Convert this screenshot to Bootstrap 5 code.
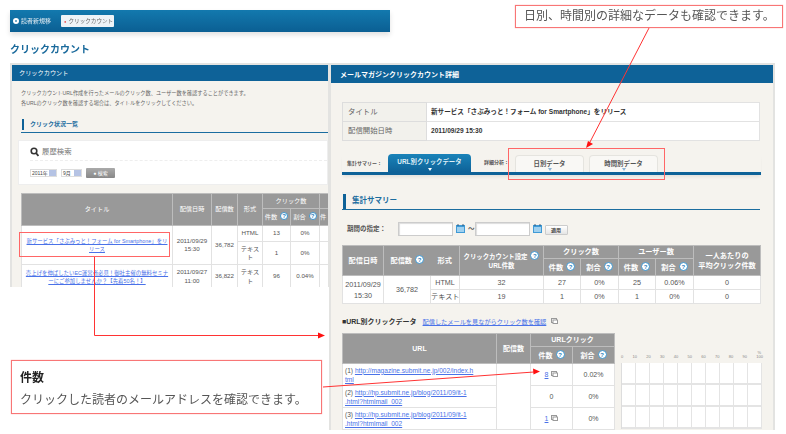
<!DOCTYPE html>
<html lang="ja">
<head>
<meta charset="utf-8">
<title>クリックカウント</title>
<link href="https://cdn.jsdelivr.net/npm/bootstrap@5.3.0/dist/css/bootstrap.min.css" rel="stylesheet">
<style>
html,body{margin:0;background:#fff;overflow:hidden}
body{font-family:"Liberation Sans","Noto Sans CJK JP",sans-serif;color:#555}
.stage{position:relative;width:786px;height:434px;overflow:hidden;background:#fff}
.shot{filter:blur(.45px)}
/* top strip */
.topbar{position:absolute;left:10px;top:10px;width:380px;height:22px;background:linear-gradient(#1379ae,#0b5f93);box-shadow:0 3px 5px rgba(0,0,0,.12);font-size:6px;color:#e6eef4;padding-left:3px;gap:8px;white-space:nowrap}
.dotmark{width:6px;height:6px;border-radius:50%;background:#fff;border:2px solid #fff;box-shadow:inset 0 0 0 1px #0d6aa0;display:inline-block;margin-right:2px}
.crumbbox{background:#eef3f7;color:#666;height:12px;width:53px;border-radius:1px;padding-left:3px;line-height:12px;margin-left:2px;font-size:5.6px}
.crumbbox i{color:#e44;font-style:normal;font-size:4px;margin-right:2px}
.pagetitle{position:absolute;left:10px;top:43px;font-size:10px;font-weight:700;color:#1a6a9c;line-height:13px;margin:0}
/* panels */
.panelbox{position:absolute;background:#f5f3ee;border:2px solid #e3e3e1;border-bottom:0;overflow:hidden}
.leftp{left:10px;top:63px;width:320px;height:224px}
.rightp{left:329px;top:63px;width:446px;height:367px;border-right-width:2px}
.panelhead{background:#0e6298;color:#fff;line-height:16px;height:16px;font-size:6.2px;padding-left:7px}
.rightp .panelhead{height:18px;line-height:19px;font-size:7px;font-weight:700;padding-left:9px}
.introtext{font-size:5.2px;line-height:10px;color:#666;margin:7px 0 0 9px;height:20px;white-space:nowrap}
.secthead{border-bottom:1px solid #1b6d9f;border-left:0;color:#1b6d9f;font-weight:700;display:flex;align-items:center}
.secthead::before{content:"";background:#0e6298;display:block;flex:none}
.lefthead{font-size:6px;height:16px;margin:9px 0 0 9px;padding-bottom:1px}
.lefthead::before{width:2px;height:11px;margin-right:6px;margin-left:1px}
.searchcard{background:#fff;height:45px;margin:7px 0 0 6px;border:1px solid #eee;padding:0 0 0 11px}
.searchtitle{font-size:7.4px;color:#777;height:20px;border-bottom:1px dashed #eee;padding-top:2px}
.lensico{width:9px;height:10px;margin-right:3px}
.selectbox{font-size:5px;height:8px;line-height:7px;color:#444;background:#fff;border:1px solid #ddd;padding-left:1px;margin-right:4px;width:27px;position:relative}
.selectbox.shorter{width:21px}
.selectbox b{position:absolute;right:0;top:0;width:7px;height:6px;background:#b5c3e4}
.gobtn{background:linear-gradient(#aaa,#888);color:#fff;width:29px;height:10px;line-height:10px;font-size:5px;text-align:center;border-radius:1px}
.searchrow{margin-top:7px}
/* tables */
.shot-table{table-layout:fixed;border-collapse:collapse;margin:0;--bs-table-bg:transparent;--bs-table-color:inherit}
.shot-table th,.shot-table td{padding:0;text-align:center;vertical-align:middle;border:1px solid #e2e2e2;line-height:1.3;font-weight:400;box-shadow:none}
.shot-table th{background:#999;color:#fff;border-color:#bdbdbd}
.shot-table td{background:#fff;color:#555}
.shot-table a{color:#4a72e8}
.lefttbl{font-size:6.2px;width:360px;margin-left:9px;margin-top:8px}
.lefttbl .hr1{height:15px}.lefttbl .hr2{height:17px}
.lefttbl .r1{height:16px}.lefttbl .r2{height:23px}.lefttbl .r3{height:24px}
.lefttbl td.titlecell{padding:0 3px;line-height:8px;font-size:5.4px}
.infotbl{width:418px;margin:19px 0 0 11px;font-size:7px}
.infotbl tr{height:19px}
.infotbl th{background:#f2f1ec;color:#666;text-align:left;padding-left:5px;border-color:#ddd;font-size:7.4px}
.infotbl td{text-align:left;padding-left:4px;font-weight:700;color:#333;font-size:6.6px}
/* tabs */
.tabstrip{margin:13px 0 0 11px;width:419px;height:21px;border-bottom:3px solid #0e6298;font-size:5px;font-weight:700;color:#555;box-shadow:0 3px 3px -1px rgba(0,0,0,.07);white-space:nowrap}
.tablabel{line-height:18px;padding-left:5px;width:46px;flex:none}
.tabon,.taboff{width:83px;height:18px;border-radius:4px 4px 0 0;text-align:center;font-size:6.4px;line-height:15px;position:relative;font-weight:700}
.tabon{background:linear-gradient(#1a83b9,#0e6298);color:#dfeef6}
.taboff{width:69px;height:17px;margin-top:1px;background:#f9f8f5;border:1px solid #e5e4df;border-bottom:0;color:#555;margin-right:5px}
.tabon::after,.taboff::after{content:"";position:absolute;left:50%;bottom:1px;margin-left:-2px;border:2px solid transparent;border-top:3px solid #fff;border-bottom:0}
.taboff::after{border-top-color:#8db3d5}
.tablabel2{width:44px;text-align:left;padding-left:13px;flex:none;line-height:20px;white-space:nowrap}
.righthead{font-size:7.5px;height:17px;margin:18px 13px 0 11px;padding-bottom:0}
.righthead::before{width:3px;height:15px;margin-right:6px;margin-left:1px}
.periodrow{margin:12px 0 0 16px;height:13px;font-size:6.5px;font-weight:700;color:#555}
.periodlabel{width:51px;flex:none;white-space:nowrap}
.dateinput{width:55px;height:14px;background:#fff;border:1px solid #ccc;box-shadow:inset 1px 1px 1px #ddd;flex:none}
.calico{width:9px;height:9px;margin:0 3px;flex:none}
.applybtn{background:linear-gradient(#fff,#e5e5e5);border:1px solid #ccc;border-radius:1px;width:23px;height:10px;line-height:8px;font-size:5px;text-align:center;margin-left:0;margin-top:3px;color:#444;flex:none}
.sumtbl{width:418px;margin:10px 0 0 11px;font-size:7.2px}
.sumtbl th{font-weight:700}
.sumtbl th.nowrapcell{white-space:nowrap;font-size:6.4px}
.sumtbl .hr1{height:13px}.sumtbl .hr2{height:17px}.sumtbl .r{height:14px}
.sumtbl td{line-height:11px;white-space:nowrap}
.sumtbl th.plainedge{border-right:0}
.sumtbl th.plainedge + th{border-left:0}
.urlhead{margin:11px 0 0 11px;height:14px;font-size:7px;font-weight:700;color:#333;line-height:14px;white-space:nowrap}
.urlhead a{color:#4a72e8;font-weight:400;margin-left:4px;font-size:6.2px}
.copyico{width:7px;height:6px;margin-left:3px;vertical-align:0}
.lowerwrap{margin:4px 0 0 11px;gap:6px}
.urltbl{width:272px;font-size:7px;flex:none}
.urltbl th{font-weight:700}
.urltbl .hr1{height:13px}.urltbl .hr2{height:17px}
.urltbl .r{height:22px}
.urltbl td.urlcell{text-align:left;padding:0 0 0 2px;line-height:9px;white-space:nowrap;font-size:6.6px}
.chartbox{width:140px;flex:none;margin-left:0}
.axisrow{height:30px;align-items:flex-end;justify-content:space-between;font-size:4px;color:#888;padding-bottom:3px;margin-right:-2px;position:relative}
.pctmark{position:absolute;right:2px;top:17px}
.gridbox{display:grid;grid-template-columns:repeat(10,14px);grid-auto-rows:22px;background:#fff;border-left:1px solid #ddd}
.gridbox span{border-right:1px solid #e4e4e4;border-bottom:2px solid #e4e4e4}
.hintq{display:inline-block;width:8px;height:8px;line-height:7px;border-radius:50%;background:#fff;border:1px solid #3d93cc;color:#2c7fbd;font-size:6px;font-weight:700;text-align:center;margin-left:3px;vertical-align:1px}
.sumtbl .hintq,.urltbl .hintq{width:9px;height:9px;line-height:8px}
/* annotations */
.notebox{position:absolute;background:#fff;border:1px solid #f87676;box-shadow:0 0 1px #f99;color:#555}
.note1{left:515px;top:5px;width:268px;height:23px;font-size:12px;line-height:21px;padding-left:8px;white-space:nowrap}
.note2{left:11px;top:360px;width:311px;height:54px;padding:8px 8px}
.note2 strong{display:block;font-size:12px;line-height:18px;color:#222;margin-bottom:4px}
.note2 p{font-size:12px;line-height:18px;margin:0}
.markbox{position:absolute;border:1px solid #f66}
.mark1{left:19px;top:232px;width:151px;height:25px}
.mark2{left:508px;top:148px;width:157px;height:32px}
.arrows{position:absolute;left:0;top:0;width:786px;height:434px;pointer-events:none}
</style>
</head>
<body>
<div class="stage">
  <div class="shot">
    <div class="topbar d-flex align-items-center">
      <span class="d-flex align-items-center"><span class="dotmark"></span>読者新規移</span>
      <span class="crumbbox"><i>●</i>クリックカウント</span>
    </div>
    <h1 class="pagetitle">クリックカウント</h1>

    <section class="panelbox leftp">
      <div class="panelhead">クリックカウント</div>
      <p class="introtext">クリックカウントURL作成を行ったメールのクリック数、ユーザー数を確認することができます。<br>各URLのクリック数を確認する場合は、タイトルをクリックしてください。</p>
      <div class="secthead lefthead">クリック状況一覧</div>
      <div class="searchcard">
        <div class="searchtitle d-flex align-items-center">
          <svg class="lensico" viewBox="0 0 9 10"><circle cx="4" cy="4" r="2.8" fill="none" stroke="#333" stroke-width="1.6"/><path d="M6 6l2.400 3" stroke="#333" stroke-width="1.800"/></svg>履歴検索
        </div>
        <div class="searchrow d-flex align-items-center">
          <span class="selectbox">2011年<b></b></span>
          <span class="selectbox shorter">9月<b></b></span>
          <span class="gobtn">● 検索</span>
        </div>
      </div>
      <table class="table shot-table lefttbl">
        <colgroup><col width="151"><col width="39"><col width="26"><col width="25"><col width="28"><col width="29"><col width="62"></colgroup>
        <tr class="hr1"><th rowspan="2">タイトル</th><th rowspan="2">配信日時</th><th rowspan="2">配信数</th><th rowspan="2">形式</th><th colspan="2">クリック数</th><th></th></tr>
        <tr class="hr2"><th>件数<span class="hintq">?</span></th><th>割合<span class="hintq">?</span></th><th class="text-start">件</th></tr>
        <tr class="r1"><td rowspan="2" class="titlecell"><a href="#">新サービス「さぶみっと！フォーム for Smartphone」をリリース</a></td><td rowspan="2">2011/09/29<br>15:30</td><td rowspan="2">36,782</td><td>HTML</td><td>13</td><td>0%</td><td></td></tr>
        <tr class="r2"><td>テキスト</td><td>1</td><td>0%</td><td></td></tr>
        <tr class="r3"><td class="titlecell"><a href="#">売上げを伸ばしたいEC運営者必見！御社主催の無料セミナーにご参加しませんか？【先着50名！】</a></td><td>2011/09/27<br>11:00</td><td>36,822</td><td>テキスト</td><td>96</td><td>0.04%</td><td></td></tr>
      </table>
    </section>

    <section class="panelbox rightp">
      <div class="panelhead">メールマガジンクリックカウント詳細</div>
      <table class="table shot-table infotbl">
        <colgroup><col width="84"><col></colgroup>
        <tr><th>タイトル</th><td>新サービス「さぶみっと！フォーム for Smartphone」をリリース</td></tr>
        <tr><th>配信開始日時</th><td>2011/09/29 15:30</td></tr>
      </table>
      <div class="tabstrip d-flex align-items-end">
        <span class="tablabel">集計サマリー：</span>
        <span class="tabon">URL別クリックデータ</span>
        <span class="tablabel2">詳細分析：</span>
        <span class="taboff">日別データ</span>
        <span class="taboff">時間別データ</span>
      </div>
      <div class="secthead righthead">集計サマリー</div>
      <div class="periodrow d-flex align-items-center">
        <span class="periodlabel">期間の指定：</span>
        <span class="dateinput"></span>
        <svg class="calico" viewBox="0 0 9 9"><rect y="1" width="9" height="8" fill="#3f9ad6"/><path d="M2 0v2M7 0v2" stroke="#246" stroke-width=".8"/><rect x="1" y="3" width="7" height="5" fill="#9fd0ef"/></svg>
        <span>～</span>
        <span class="dateinput"></span>
        <svg class="calico" viewBox="0 0 9 9"><rect y="1" width="9" height="8" fill="#3f9ad6"/><path d="M2 0v2M7 0v2" stroke="#246" stroke-width=".8"/><rect x="1" y="3" width="7" height="5" fill="#9fd0ef"/></svg>
        <span class="applybtn">適用</span>
      </div>
      <table class="table shot-table sumtbl">
        <colgroup><col width="41"><col width="47"><col width="29"><col width="84"><col width="37"><col width="38"><col width="37"><col width="38"><col width="67"></colgroup>
        <tr class="hr1"><th rowspan="2">配信日時</th><th rowspan="2" class="plainedge">配信数<span class="hintq">?</span></th><th rowspan="2">形式</th><th rowspan="2" class="nowrapcell">クリックカウント設定<span class="hintq">?</span><br>URL件数</th><th colspan="2">クリック数</th><th colspan="2">ユーザー数</th><th rowspan="2">一人あたりの<br>平均クリック件数</th></tr>
        <tr class="hr2"><th>件数<span class="hintq">?</span></th><th>割合<span class="hintq">?</span></th><th>件数<span class="hintq">?</span></th><th>割合<span class="hintq">?</span></th></tr>
        <tr class="r"><td rowspan="2">2011/09/29<br>15:30</td><td rowspan="2">36,782</td><td>HTML</td><td>32</td><td>27</td><td>0%</td><td>25</td><td>0.06%</td><td>0</td></tr>
        <tr class="r"><td>テキスト</td><td>19</td><td>1</td><td>0%</td><td>1</td><td>0%</td><td>0</td></tr>
      </table>
      <div class="urlhead">■URL別クリックデータ <a href="#">配信したメールを見ながらクリック数を確認</a>
        <svg class="copyico" viewBox="0 0 7 6"><rect x=".5" y=".5" width="5" height="4" fill="#fff" stroke="#999"/><rect x="2" y="2" width="4.500" height="3.500" fill="#fff" stroke="#999"/></svg>
      </div>
      <div class="lowerwrap d-flex">
        <table class="table shot-table urltbl">
          <colgroup><col width="154"><col width="34"><col width="42"><col width="42"></colgroup>
          <tr class="hr1"><th rowspan="2">URL</th><th rowspan="2">配信数</th><th colspan="2">URLクリック</th></tr>
          <tr class="hr2"><th>件数<span class="hintq">?</span></th><th>割合<span class="hintq">?</span></th></tr>
          <tr class="r"><td class="urlcell">(1) <a href="#">http://magazine.submit.ne.jp/002/index.h</a><br><a href="#">tml</a></td><td rowspan="3"></td><td><a href="#">8</a><svg class="copyico" viewBox="0 0 7 6"><rect x=".5" y=".5" width="5" height="4" fill="#fff" stroke="#999"/><rect x="2" y="2" width="4.500" height="3.500" fill="#fff" stroke="#999"/></svg></td><td>0.02%</td></tr>
          <tr class="r"><td class="urlcell">(2) <a href="#">http://hp.submit.ne.jp/blog/2011/09/it-1</a><br><a href="#">.html?htmlmail_002</a></td><td>0</td><td>0%</td></tr>
          <tr class="r"><td class="urlcell">(3) <a href="#">http://hp.submit.ne.jp/blog/2011/09/it-1</a><br><a href="#">.html?htmlmail_002</a></td><td><a href="#">1</a><svg class="copyico" viewBox="0 0 7 6"><rect x=".5" y=".5" width="5" height="4" fill="#fff" stroke="#999"/><rect x="2" y="2" width="4.500" height="3.500" fill="#fff" stroke="#999"/></svg></td><td>0%</td></tr>
        </table>
        <div class="chartbox">
          <div class="axisrow d-flex"><span class="pctmark">%</span><span>0</span><span>10</span><span>20</span><span>30</span><span>40</span><span>50</span><span>60</span><span>70</span><span>80</span><span>90</span><span>100</span></div>
          <div class="gridbox">
            <span></span><span></span><span></span><span></span><span></span><span></span><span></span><span></span><span></span><span></span>
            <span></span><span></span><span></span><span></span><span></span><span></span><span></span><span></span><span></span><span></span>
            <span></span><span></span><span></span><span></span><span></span><span></span><span></span><span></span><span></span><span></span>
          </div>
        </div>
      </div>
    </section>
  </div>

  <div class="markbox mark1"></div>
  <div class="markbox mark2"></div>
  <svg class="arrows" viewBox="0 0 786 434">
    <g fill="none" stroke="#f33" stroke-width="1">
      <path d="M649 28L590 142"/>
      <path d="M94.500 257V335.500H320"/>
      <path d="M323 387L534 372"/>
    </g>
    <g fill="#f11">
      <path d="M586 148l2-7 5 3z"/>
      <path d="M325 335.500l-7-3v6z"/>
      <path d="M540 371.500l-7-3 .5 6z"/>
    </g>
  </svg>
  <div class="notebox note1">日別、時間別の詳細なデータも確認できます。</div>
  <div class="notebox note2"><strong>件数</strong><p>クリックした読者のメールアドレスを確認できます。</p></div>
</div>
<script src="https://cdn.jsdelivr.net/npm/bootstrap@5.3.0/dist/js/bootstrap.bundle.min.js"></script>
</body>
</html>
